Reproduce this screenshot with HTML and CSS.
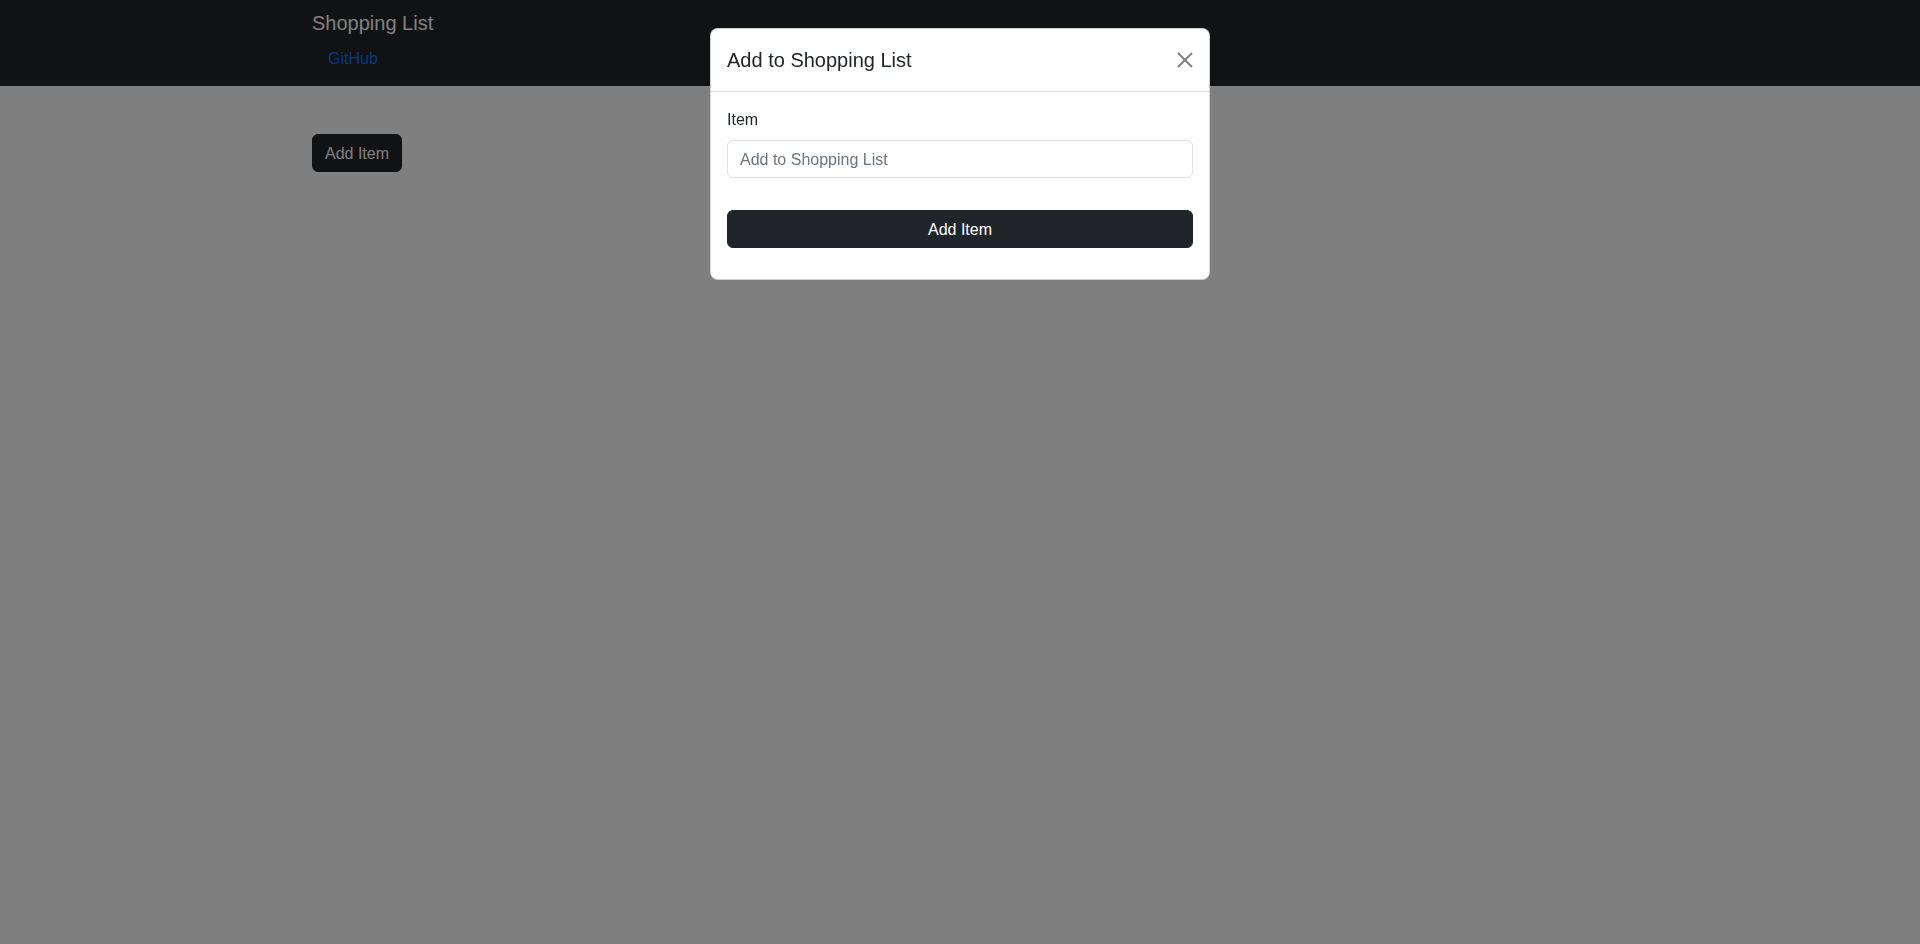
FILE: index.html
```html
<!DOCTYPE html>
<html lang="en">
<head>
<meta charset="utf-8">
<title>Shopping List</title>
<link rel="stylesheet" href="styles.css">
</head>
<body>
<nav class="navbar">
  <div class="container nav-inner">
    <a class="brand" href="#">Shopping List</a>
    <a class="nav-link" href="#">GitHub</a>
  </div>
</nav>
<main class="container main">
  <button class="btn btn-dark">Add Item</button>
</main>

<div class="backdrop"></div>
<div class="modal">
  <div class="modal-content">
    <div class="modal-header">
      <h5 class="modal-title">Add to Shopping List</h5>
      <button class="btn-close" aria-label="Close">
        <svg width="16" height="16" viewBox="0 0 16 16"><path d="M1 1L15 15M15 1L1 15" stroke="#000" stroke-width="1.9" fill="none"/></svg>
      </button>
    </div>
    <div class="modal-body">
      <form class="form">
        <label class="form-label" for="item">Item</label>
        <input class="form-control" id="item" type="text" placeholder="Add to Shopping List">
        <button type="button" class="btn btn-dark btn-block">Add Item</button>
      </form>
    </div>
  </div>
</div>
</body>
</html>
```

FILE: styles.css
```css
* { box-sizing: border-box; }
html, body { margin: 0; padding: 0; }
body {
  font-family: "Liberation Sans", Arial, sans-serif;
  font-size: 16px;
  line-height: 24px;
  color: #212529;
  background: #fff;
  height: 944px;
}
.container {
  max-width: 1320px;
  margin: 0 auto;
  padding: 0 12px;
}
.navbar {
  background: #212529;
  padding: 0 0 8px;
}
.nav-inner {
  display: flex;
  flex-direction: column;
  align-items: flex-start;
}
.brand {
  color: #fff;
  font-size: 20px;
  line-height: 30px;
  padding: 8px 0 0;
  text-decoration: none;
}
.nav-link {
  color: #0d6efd;
  text-decoration: none;
  padding: 9px 16px 7px;
}
.main { padding-top: 48px; }
.btn {
  font-family: inherit;
  font-size: 16px;
  line-height: 24px;
  padding: 7px 12px 5px;
  border-radius: 6px;
  border: 1px solid transparent;
  cursor: pointer;
}
.btn-dark {
  background: #212529;
  border-color: #212529;
  color: #fff;
}
.backdrop {
  position: fixed;
  inset: 0;
  background: rgba(0, 0, 0, 0.5);
}
.modal {
  position: fixed;
  top: 28px;
  left: 0;
  right: 0;
  display: flex;
  justify-content: center;
}
.modal-content {
  width: 500px;
  background: #fff;
  border: 1px solid rgba(0, 0, 0, 0.175);
  border-radius: 8px;
}
.modal-header {
  display: flex;
  align-items: center;
  justify-content: space-between;
  padding: 16px;
  border-bottom: 1px solid #dee2e6;
}
.modal-title {
  margin: 0;
  font-size: 20px;
  line-height: 30px;
  font-weight: 500;
}
.btn-close {
  width: 32px;
  height: 32px;
  margin: -8px -8px -8px auto;
  padding: 8px;
  border: 0;
  background: transparent;
  opacity: 0.5;
  display: flex;
  align-items: center;
  justify-content: center;
}
.modal-body { padding: 15px 16px 16px; }
.form {
  display: flex;
  flex-direction: column;
  padding-bottom: 15px;
}
.form-label { margin-bottom: 8px; padding-top: 1px; }
.form-control {
  font-family: inherit;
  font-size: 16px;
  line-height: 24px;
  padding: 7px 12px 5px;
  border: 1px solid #dee2e6;
  border-radius: 6px;
  color: #212529;
  margin-bottom: 32px;
}
.form-control::placeholder { color: #6c757d; opacity: 1; }
.btn-block { width: 100%; }
```
